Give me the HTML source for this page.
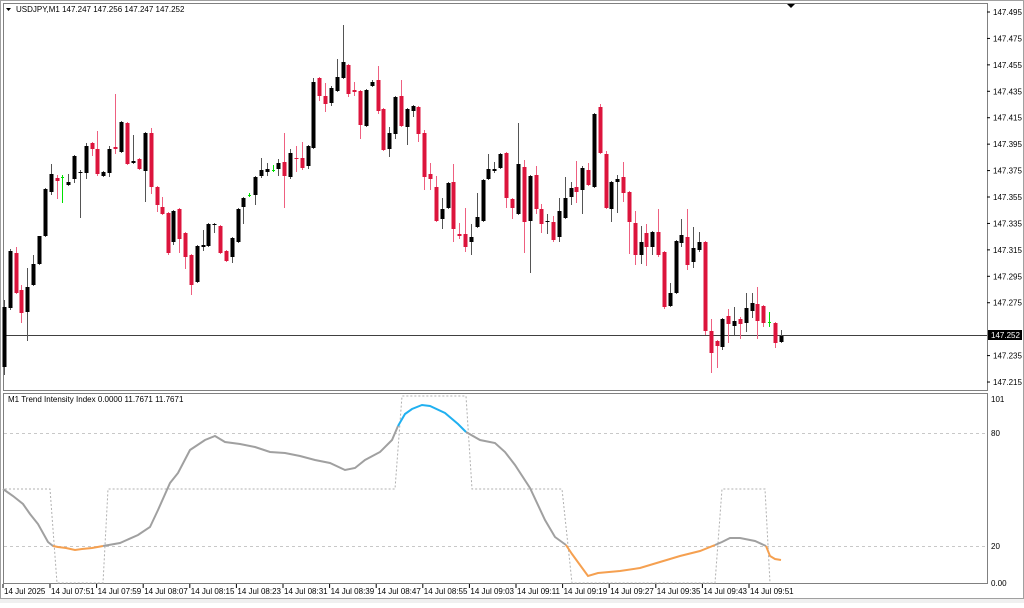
<!DOCTYPE html>
<html><head><meta charset="utf-8"><style>
html,body{margin:0;padding:0;background:#fff;}
body{width:1024px;height:603px;overflow:hidden;font-family:"Liberation Sans",sans-serif;}
svg text{font-family:"Liberation Sans",sans-serif;font-size:8px;fill:#000;}
</style></head><body>
<svg id="s" width="1024" height="603" xmlns="http://www.w3.org/2000/svg">
<rect x="0" y="0" width="1024" height="603" fill="#fff"/>
<rect x="0" y="598" width="1024" height="5" fill="#f0f0f0"/>
<rect x="0.5" y="0.5" width="1023" height="598" fill="none" stroke="#a0a0a0"/>
<!-- main chart frame -->
<rect x="3.5" y="3.5" width="984" height="387" fill="none" stroke="#808080"/>
<rect x="3.5" y="393.5" width="984" height="190" fill="none" stroke="#808080"/>
<polygon points="787,4 795,4 791,8" fill="#000"/>
<text x="16" y="12">USDJPY,M1  147.247 147.256 147.247 147.252</text>
<polygon points="6,8 11,8 8.5,11" fill="#000"/>
<text x="8" y="402">M1 Trend Intensity Index 0.0000 11.7671 11.7671</text>
<line x1="4" y1="335.5" x2="987" y2="335.5" stroke="#404040" stroke-width="1"/>
<line x1="4" y1="433.5" x2="987" y2="433.5" stroke="#c8c8c8" stroke-dasharray="3,3"/>
<line x1="4" y1="546.5" x2="987" y2="546.5" stroke="#c8c8c8" stroke-dasharray="3,3"/>
<g id="c"></g>
<polyline fill="none" stroke="#b0b0b0" stroke-width="1" stroke-dasharray="2,2" points="5,489 50,489 57,583 103,583 108,489 395,489 402,396 466,396 472,489 562,489 572,583 715,583 722,489 765,489 770,583"/>
<polyline fill="none" stroke="#a0a0a0" stroke-width="2" points="3,489 13,496 23,504 30,514 38,524 48,542 53,546"/>
<polyline fill="none" stroke="#f5a050" stroke-width="2" points="53,546 58,547 66,548 75,550 82,549 92,548 103,546"/>
<polyline fill="none" stroke="#a0a0a0" stroke-width="2" points="103,546 120,543 138,535 150,527 158,510 170,483 178,473 190,450 205,440 215,436 225,442 240,444 255,447 270,452 285,453 300,456 315,460 330,463 345,470 355,468 365,460 380,452 392,440 398,426"/>
<polyline fill="none" stroke="#20b0f0" stroke-width="2" points="398,426 405,414 412,409 422,405 430,406 445,413 458,424 466,432"/>
<polyline fill="none" stroke="#a0a0a0" stroke-width="2" points="466,432 480,440 495,443 505,452 515,465 530,488 545,520 555,537 566,545"/>
<polyline fill="none" stroke="#f5a050" stroke-width="2" points="566,545 572,554 580,565 588,576 598,573 620,571 640,568 660,562 680,556 700,551 715,545"/>
<polyline fill="none" stroke="#a0a0a0" stroke-width="2" points="715,545 722,542 730,538 740,538 755,541 766,546"/>
<polyline fill="none" stroke="#f5a050" stroke-width="2" points="766,546 770,556 775,559 781,560"/>
<g id="ax"></g>
<rect x="988" y="330" width="34" height="10" fill="#000"/>
<text x="991" y="338" style="fill:#fff">147.252</text>
<text x="991" y="402">101</text>
<text x="991" y="436">80</text>
<text x="991" y="549">20</text>
<text x="991" y="586">0.00</text>
</svg>
<script>
var C=[
[4,307,367,300,375,1],[10,251,308,249,310,1],[16,253,293,247,294,0],[21,290,313,285,323,0],[27,287,312,268,341,1],[33,264,285,255,286,1],[39,236,264,236,265,1],[45,189,236,188,237,1],[51,174,192,164,195,1],[57,178,181,175,199,0],[62,177,178,175,203,2],[68,182,185,174,186,1],[74,156,179,155,183,1],[80,172,173,170,218,1],[86,146,173,143,179,1],[92,143,149,142,156,0],[97,149,174,131,176,0],[103,172,176,171,177,1],[109,149,173,146,177,1],[115,147,149,94,154,0],[121,122,152,121,153,1],[127,123,164,122,165,0],[133,161,163,135,164,1],[139,159,169,158,170,0],[145,133,171,132,202,1],[151,133,187,128,194,0],[157,187,205,186,212,0],[162,207,214,197,215,0],[168,213,253,212,255,0],[173,211,242,210,245,1],[179,209,239,208,253,0],[185,233,257,232,269,0],[191,255,285,254,295,0],[197,246,282,245,283,1],[203,245,247,230,251,1],[208,224,246,223,247,1],[214,224,225,223,233,1],[220,226,253,225,254,0],[226,251,261,250,262,0],[232,238,257,237,263,1],[238,209,242,208,243,1],[243,198,207,197,224,1],[249,195,195,193,197,2],[255,177,195,176,205,1],[261,170,176,158,178,1],[267,169,172,163,176,1],[273,170,170,165,172,2],[278,163,169,159,176,1],[284,162,176,133,208,0],[290,153,177,149,179,1],[296,158,159,146,172,0],[302,158,168,142,170,0],[308,146,166,145,169,1],[313,82,148,78,149,1],[319,78,96,77,101,0],[325,96,104,83,112,0],[331,88,103,86,106,1],[337,77,91,59,92,1],[343,62,78,25,79,1],[348,65,94,64,97,0],[354,90,92,82,96,0],[360,91,125,90,139,0],[366,90,126,89,127,1],[372,82,86,80,87,1],[378,80,111,66,114,0],[383,109,150,108,151,0],[389,133,149,127,157,1],[395,97,134,96,139,1],[401,96,126,80,127,0],[407,109,127,108,145,1],[413,106,111,105,117,1],[418,107,134,106,142,0],[424,133,177,130,190,0],[430,174,179,163,190,0],[436,187,221,176,222,0],[442,209,219,198,229,1],[448,183,208,182,209,1],[453,182,229,164,242,0],[459,234,236,223,239,0],[465,234,247,208,252,0],[471,237,242,224,255,1],[477,217,227,193,228,1],[483,180,221,179,222,1],[488,169,179,154,180,1],[494,169,171,162,173,1],[500,154,168,153,169,1],[506,153,198,152,208,0],[512,199,208,198,219,0],[518,164,214,123,215,1],[524,167,222,160,253,0],[530,176,221,175,273,1],[536,175,209,166,214,0],[541,209,224,204,233,0],[547,221,222,214,234,1],[553,222,240,216,242,0],[559,211,237,198,242,1],[565,198,218,177,219,1],[571,188,197,182,205,1],[576,187,192,161,203,0],[582,168,190,166,214,1],[588,170,185,163,186,0],[594,114,187,113,188,1],[600,107,153,104,154,0],[606,154,208,151,209,0],[611,182,209,181,222,1],[617,179,182,175,213,1],[623,177,193,162,202,0],[629,192,222,191,254,0],[635,223,255,211,265,0],[641,242,255,226,264,1],[646,233,247,224,266,0],[652,232,247,231,255,1],[658,232,255,209,257,0],[664,252,307,251,309,0],[670,293,306,283,307,1],[676,241,293,240,294,1],[681,235,243,219,247,1],[687,237,265,209,270,0],[693,248,262,227,268,1],[699,242,250,232,252,1],[705,242,331,241,335,0],[711,331,353,319,373,0],[717,341,346,340,368,0],[722,319,347,318,350,1],[728,316,324,309,343,0],[734,321,326,307,335,1],[740,319,324,317,339,0],[746,308,323,293,332,1],[752,303,311,293,318,1],[757,304,321,287,339,0],[763,306,323,305,327,0],[769,322,322,312,327,2],[775,323,343,322,348,0],[781,336,342,330,343,1]];
var g=document.getElementById('c'),h='';
C.forEach(function(c){var x=c[0],col=c[5]==0?'#dc143c':(c[5]==1?'#000':'#00e000'),wc=c[5]==0?'#ee6080':(c[5]==1?'#555':'#00e000');
h+='<line x1="'+(x+.5)+'" y1="'+c[3]+'" x2="'+(x+.5)+'" y2="'+c[4]+'" stroke="'+wc+'"/>';
var t=Math.min(c[1],c[2]),hh=Math.max(1,Math.abs(c[2]-c[1]));
if(c[5]==2)h+='<rect x="'+(x-1)+'" y="'+t+'" width="3" height="1" fill="'+col+'"/>';
else h+='<rect x="'+(x-1.5)+'" y="'+t+'" width="4" height="'+hh+'" fill="'+col+'"/>';});
g.innerHTML=h;
var a=document.getElementById('ax'),s='';
for(var i=0;i<15;i++){var p=(147.495-i*0.02).toFixed(3),y=12+i*26.43;if(i==12)continue;
s+='<line x1="987" y1="'+y+'" x2="990" y2="'+y+'" stroke="#000"/><text x="993" y="'+(y+3)+'">'+p+'</text>';}
var L=['14 Jul 2025','14 Jul 07:51','14 Jul 07:59','14 Jul 08:07','14 Jul 08:15','14 Jul 08:23','14 Jul 08:31','14 Jul 08:39','14 Jul 08:47','14 Jul 08:55','14 Jul 09:03','14 Jul 09:11','14 Jul 09:19','14 Jul 09:27','14 Jul 09:35','14 Jul 09:43','14 Jul 09:51'];
L.forEach(function(t,i){var x=i==0?3:50+(i-1)*46.6;s+='<line x1="'+x+'" y1="584" x2="'+x+'" y2="588" stroke="#000"/><text x="'+(x+1)+'" y="594">'+t+'</text>';});
a.innerHTML=s;
</script>
</body></html>
